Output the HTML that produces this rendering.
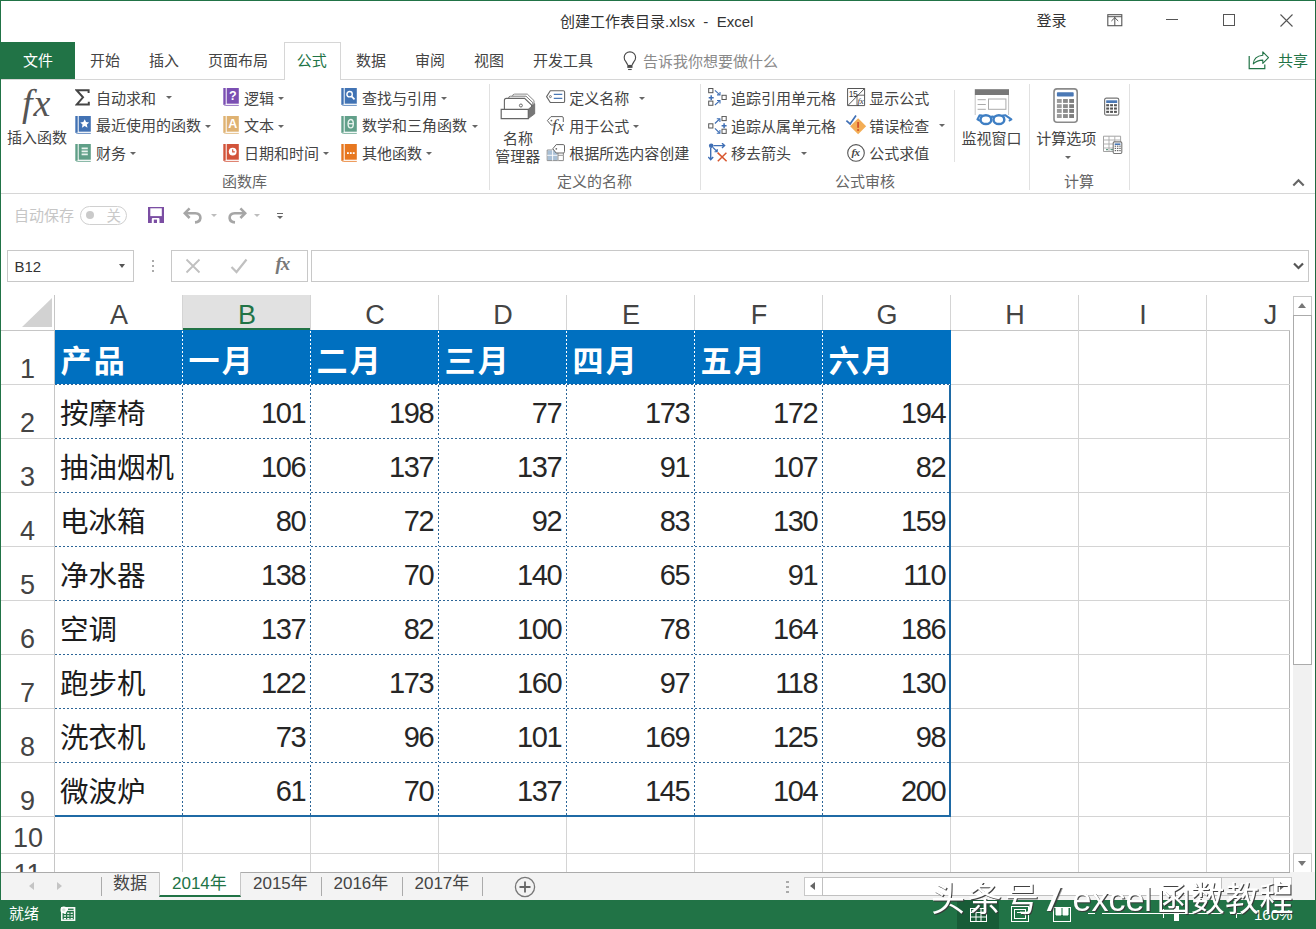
<!DOCTYPE html>
<html lang="zh-CN"><head><meta charset="utf-8"><title>Excel</title>
<style>
html,body{margin:0;padding:0;}
body{width:1316px;height:929px;overflow:hidden;position:relative;background:#fff;font-family:"Liberation Sans","Noto Sans CJK SC",sans-serif;color:#444;}
body div,body span.t,body svg{position:absolute;box-sizing:border-box;}
span.t{white-space:nowrap;display:block;}
.dd{position:absolute;width:0;height:0;border-left:3px solid transparent;border-right:3px solid transparent;border-top:3px solid #666;}
</style></head><body>

<div style="left:0px;top:0px;width:1316px;height:1px;background:#217346;"></div>
<div style="left:0px;top:0px;width:1px;height:929px;background:#217346;"></div>
<div style="left:1314.8px;top:0px;width:1.2px;height:929px;background:#1f6a40;"></div>
<span class="t" style="left:560px;top:11.5px;font-size:15px;line-height:20px;color:#333;">创建工作表目录.xlsx&nbsp;&nbsp;-&nbsp;&nbsp;Excel</span>
<span class="t" style="left:1036.5px;top:11px;font-size:15px;line-height:20px;color:#333;">登录</span>
<svg style="left:1107px;top:14px;" width="16" height="13" viewBox="0 0 16 13"><rect x="0.8" y="0.7" width="14" height="11" fill="none" stroke="#555" stroke-width="1.1"/><path d="M0.8 2.7H14.8M7.8 2.7V11.7M4.4 7L7.8 3.7L11.2 7" stroke="#555" stroke-width="1" fill="none"/></svg>
<div style="left:1166px;top:19px;width:12px;height:1px;background:#555;"></div>
<div style="left:1223px;top:14px;width:12px;height:12px;border:1px solid #555;"></div>
<svg style="left:1280px;top:14px;" width="13" height="13" viewBox="0 0 13 13"><path d="M0.5 0.5L12.5 12.5M12.5 0.5L0.5 12.5" stroke="#555" stroke-width="1.1" fill="none"/></svg>
<div style="left:1px;top:79px;width:1314px;height:1px;background:#d6d6d6;"></div>
<div style="left:1px;top:42px;width:74px;height:37px;background:#217346;"></div>
<span class="t" style="left:1px;top:51px;width:74px;text-align:center;font-size:15px;line-height:20px;color:#fff;">文件</span>
<span class="t" style="left:55px;top:51px;width:100px;text-align:center;font-size:15px;line-height:20px;color:#444;">开始</span>
<span class="t" style="left:114px;top:51px;width:100px;text-align:center;font-size:15px;line-height:20px;color:#444;">插入</span>
<span class="t" style="left:188px;top:51px;width:100px;text-align:center;font-size:15px;line-height:20px;color:#444;">页面布局</span>
<span class="t" style="left:321px;top:51px;width:100px;text-align:center;font-size:15px;line-height:20px;color:#444;">数据</span>
<span class="t" style="left:380px;top:51px;width:100px;text-align:center;font-size:15px;line-height:20px;color:#444;">审阅</span>
<span class="t" style="left:439px;top:51px;width:100px;text-align:center;font-size:15px;line-height:20px;color:#444;">视图</span>
<span class="t" style="left:513px;top:51px;width:100px;text-align:center;font-size:15px;line-height:20px;color:#444;">开发工具</span>
<div style="left:284px;top:42px;width:57px;height:38px;background:#fff;border:1px solid #d6d6d6;border-bottom:none;"></div>
<span class="t" style="left:283.2px;top:51px;width:57px;text-align:center;font-size:15px;line-height:20px;color:#217346;">公式</span>
<svg style="left:623px;top:51px;" width="14" height="20" viewBox="0 0 14 20"><path d="M4.7 13.9L2.7 10.4A5.7 5.7 0 1 1 11.1 10.4L9.1 13.9" fill="none" stroke="#4a4a4a" stroke-width="1.15"/><rect x="4.3" y="13.9" width="5.2" height="3" fill="#4a4a4a"/><path d="M5.1 18.5H8.7" stroke="#4a4a4a" stroke-width="1.1"/></svg>
<span class="t" style="left:643px;top:52px;font-size:15px;line-height:20px;color:#8a8a8a;">告诉我你想要做什么</span>
<svg style="left:1248px;top:51px;" width="22" height="19" viewBox="0 0 22 19"><path d="M1.2 4.9V17.6H16.8V13.6" fill="none" stroke="#217346" stroke-width="1.2"/><path d="M5.3 12.8Q5.8 5.2 14.8 4.2V0.9L20.5 6.6L14.8 12.3V9.1Q9 9.2 5.3 12.8Z" fill="none" stroke="#217346" stroke-width="1.1" stroke-linejoin="round"/></svg>
<span class="t" style="left:1278px;top:50.5px;font-size:15px;line-height:20px;color:#217346;">共享</span>
<div style="left:1px;top:193px;width:1314px;height:1px;background:#d6d6d6;"></div>
<div style="left:489px;top:84px;width:1px;height:106px;background:#e1e1e1;"></div>
<div style="left:700px;top:84px;width:1px;height:106px;background:#e1e1e1;"></div>
<div style="left:1029px;top:84px;width:1px;height:106px;background:#e1e1e1;"></div>
<div style="left:1129px;top:84px;width:1px;height:106px;background:#e1e1e1;"></div>
<div style="left:954px;top:90px;width:1px;height:72px;background:#e1e1e1;"></div>
<span class="t" style="left:194.5px;top:172px;width:100px;text-align:center;font-size:15px;line-height:20px;color:#666;">函数库</span>
<span class="t" style="left:534.5px;top:172px;width:120px;text-align:center;font-size:15px;line-height:20px;color:#666;">定义的名称</span>
<span class="t" style="left:815px;top:172px;width:100px;text-align:center;font-size:15px;line-height:20px;color:#666;">公式审核</span>
<span class="t" style="left:1029px;top:172px;width:100px;text-align:center;font-size:15px;line-height:20px;color:#666;">计算</span>
<svg style="left:1292px;top:178px;" width="13" height="9" viewBox="0 0 13 9"><path d="M1.3 7.6L6.5 2.2L11.7 7.6" fill="none" stroke="#666" stroke-width="2.1"/></svg>
<span class="t" style="left:22px;top:80px;font-family:'Liberation Serif',serif;font-style:italic;font-size:38px;line-height:46px;color:#555;letter-spacing:1px;">fx</span>
<span class="t" style="left:-3px;top:128px;width:80px;text-align:center;font-size:15px;line-height:20px;color:#444;">插入函数</span>
<svg style="left:75px;top:89px;" width="15" height="17" viewBox="0 0 15 17"><path d="M13.6 4V1.2H1.6L8 8.3L1.6 15.6H13.8V12.8" fill="none" stroke="#444" stroke-width="2" stroke-linejoin="miter"/></svg>
<span class="t" style="left:96px;top:88.7px;font-size:15px;line-height:20px;color:#444;">自动求和</span>
<i class="dd" style="left:166px;top:96.3px"></i>
<svg style="left:75.3px;top:116px;" width="16" height="18" viewBox="0 0 16 18"><rect x="0.3" y="0" width="2.4" height="16.6" fill="#4272b4"/><rect x="3.7" y="0" width="12.1" height="15.7" fill="#4272b4"/><path d="M0.8 16.2Q0.9 17.4 2.4 17.4H15.8" fill="none" stroke="#4272b4" stroke-width="1" opacity="0.8"/><path d="M9.7 3.2l1.35 2.9 3.1.35-2.3 2.1.65 3.1-2.8-1.6-2.8 1.6.65-3.1-2.3-2.1 3.1-.35z" fill="#fff"/></svg>
<span class="t" style="left:96px;top:116.3px;font-size:15px;line-height:20px;color:#444;">最近使用的函数</span>
<i class="dd" style="left:205.3px;top:124.8px"></i>
<svg style="left:75.3px;top:144px;" width="16" height="18" viewBox="0 0 16 18"><rect x="0.3" y="0" width="2.4" height="16.6" fill="#5f9f87"/><rect x="3.7" y="0" width="12.1" height="15.7" fill="#5f9f87"/><path d="M0.8 16.2Q0.9 17.4 2.4 17.4H15.8" fill="none" stroke="#5f9f87" stroke-width="1" opacity="0.8"/><path d="M6.6 4.4h6.2M6.6 7.4h6.2M6.6 10.4h6.2" stroke="#e8f3ee" stroke-width="1.7"/></svg>
<span class="t" style="left:96px;top:144px;font-size:15px;line-height:20px;color:#444;">财务</span>
<i class="dd" style="left:130px;top:152.3px"></i>
<svg style="left:223px;top:88px;" width="16" height="18" viewBox="0 0 16 18"><rect x="0.3" y="0" width="2.4" height="16.6" fill="#7b4fb3"/><rect x="3.7" y="0" width="12.1" height="15.7" fill="#7b4fb3"/><path d="M0.8 16.2Q0.9 17.4 2.4 17.4H15.8" fill="none" stroke="#7b4fb3" stroke-width="1" opacity="0.8"/><text x="9.8" y="12.3" font-size="12.5" font-weight="bold" fill="#fff" text-anchor="middle" font-family="Liberation Sans">?</text></svg>
<span class="t" style="left:244px;top:88.7px;font-size:15px;line-height:20px;color:#444;">逻辑</span>
<i class="dd" style="left:278px;top:96.6px"></i>
<svg style="left:223px;top:116px;" width="16" height="18" viewBox="0 0 16 18"><rect x="0.3" y="0" width="2.4" height="16.6" fill="#dfb272"/><rect x="3.7" y="0" width="12.1" height="15.7" fill="#dfb272"/><path d="M0.8 16.2Q0.9 17.4 2.4 17.4H15.8" fill="none" stroke="#dfb272" stroke-width="1" opacity="0.8"/><text x="9.8" y="12.3" font-size="12.5" font-weight="bold" fill="#fff" text-anchor="middle" font-family="Liberation Sans">A</text></svg>
<span class="t" style="left:244px;top:116.3px;font-size:15px;line-height:20px;color:#444;">文本</span>
<i class="dd" style="left:278px;top:124.8px"></i>
<svg style="left:223px;top:144px;" width="16" height="18" viewBox="0 0 16 18"><rect x="0.3" y="0" width="2.4" height="16.6" fill="#d2533a"/><rect x="3.7" y="0" width="12.1" height="15.7" fill="#d2533a"/><path d="M0.8 16.2Q0.9 17.4 2.4 17.4H15.8" fill="none" stroke="#d2533a" stroke-width="1" opacity="0.8"/><circle cx="9.7" cy="7.6" r="3.9" fill="#fff"/><path d="M9.7 5.2V7.9H11.8" stroke="#d2533a" stroke-width="1.1" fill="none"/></svg>
<span class="t" style="left:244px;top:144px;font-size:15px;line-height:20px;color:#444;">日期和时间</span>
<i class="dd" style="left:323px;top:152.3px"></i>
<svg style="left:341px;top:88px;" width="16" height="18" viewBox="0 0 16 18"><rect x="0.3" y="0" width="2.4" height="16.6" fill="#4173b4"/><rect x="3.7" y="0" width="12.1" height="15.7" fill="#4173b4"/><path d="M0.8 16.2Q0.9 17.4 2.4 17.4H15.8" fill="none" stroke="#4173b4" stroke-width="1" opacity="0.8"/><circle cx="8.6" cy="6.2" r="2.7" fill="none" stroke="#fff" stroke-width="1.4"/><path d="M10.6 8.3l2.9 3" stroke="#fff" stroke-width="1.7"/></svg>
<span class="t" style="left:362px;top:88.7px;font-size:15px;line-height:20px;color:#444;">查找与引用</span>
<i class="dd" style="left:441.3px;top:96.8px"></i>
<svg style="left:341px;top:116px;" width="16" height="18" viewBox="0 0 16 18"><rect x="0.3" y="0" width="2.4" height="16.6" fill="#62a08a"/><rect x="3.7" y="0" width="12.1" height="15.7" fill="#62a08a"/><path d="M0.8 16.2Q0.9 17.4 2.4 17.4H15.8" fill="none" stroke="#62a08a" stroke-width="1" opacity="0.8"/><ellipse cx="9.7" cy="7.7" rx="2.6" ry="4.2" fill="none" stroke="#e8f3ee" stroke-width="1.4"/><path d="M7.3 7.7h4.8" stroke="#e8f3ee" stroke-width="1.3"/></svg>
<span class="t" style="left:362px;top:116.3px;font-size:15px;line-height:20px;color:#444;">数学和三角函数</span>
<i class="dd" style="left:472px;top:124.8px"></i>
<svg style="left:341px;top:144px;" width="16" height="18" viewBox="0 0 16 18"><rect x="0.3" y="0" width="2.4" height="16.6" fill="#e7771f"/><rect x="3.7" y="0" width="12.1" height="15.7" fill="#e7771f"/><path d="M0.8 16.2Q0.9 17.4 2.4 17.4H15.8" fill="none" stroke="#e7771f" stroke-width="1" opacity="0.8"/><rect x="6" y="8.2" width="1.8" height="1.8" fill="#fff"/><rect x="8.9" y="8.2" width="1.8" height="1.8" fill="#fff"/><rect x="11.8" y="8.2" width="1.8" height="1.8" fill="#fff"/></svg>
<span class="t" style="left:362px;top:144px;font-size:15px;line-height:20px;color:#444;">其他函数</span>
<i class="dd" style="left:426.3px;top:152.3px"></i>
<svg style="left:500px;top:93px;" width="36" height="27" viewBox="0 0 36 27"><path d="M12.5 3.2Q12.6 1.1 14.6 1.1H27.3L34 7.6V11" fill="#fff" stroke="#8a8a8a" stroke-width="1"/><path d="M8.5 5.4Q8.6 3.2 10.6 3.2H26L32.8 9.6V13" fill="#fff" stroke="#7a7a7a" stroke-width="1"/><path d="M4.4 16.3V7.4Q4.4 5.4 6.4 5.4H24.6L31.6 12V16.3" fill="#fff" stroke="#666" stroke-width="1.1"/><circle cx="20.9" cy="12.5" r="1.5" fill="#fff" stroke="#666" stroke-width="1"/><path d="M28.3 16.3L34.7 10.7V20.8L28.3 25.6Z" fill="#777" stroke="#666" stroke-width="0.8"/><path d="M1.2 16.3H28.3V25.6H1.2Z" fill="#fff" stroke="#666" stroke-width="1.2"/></svg>
<span class="t" style="left:488px;top:128.5px;width:60px;text-align:center;font-size:15px;line-height:20px;color:#444;">名称</span>
<span class="t" style="left:487.7px;top:147.3px;width:60px;text-align:center;font-size:15px;line-height:20px;color:#444;">管理器</span>
<svg style="left:546px;top:90px;" width="20" height="14" viewBox="0 0 20 14"><path d="M4.3 0.7H17.3Q18.6 0.7 18.6 2V11.2Q18.6 12.5 17.3 12.5H4.3L0.6 6.6Z" fill="#fff" stroke="#666" stroke-width="1.1" stroke-linejoin="round"/><circle cx="4.4" cy="6.6" r="1" fill="none" stroke="#666" stroke-width="0.9"/><path d="M7.8 4.4H16.3M7.8 8.4H16.3" stroke="#4a78b5" stroke-width="1.1"/></svg>
<span class="t" style="left:569.3px;top:88.7px;font-size:15px;line-height:20px;color:#444;">定义名称</span>
<i class="dd" style="left:639px;top:96.6px"></i>
<svg style="left:546px;top:116px;" width="21" height="20" viewBox="0 0 21 20"><path d="M8 9L5 9L1.4 4.6L5 0.6H16Q17.3 0.6 17.3 2V6" fill="none" stroke="#666" stroke-width="1"/><circle cx="5.4" cy="4.6" r="0.9" fill="#666"/><text x="6.2" y="14.8" font-family="Liberation Serif" font-style="italic" font-size="17" fill="#444">f<tspan x="11.3" font-size="15">x</tspan></text></svg>
<span class="t" style="left:569.3px;top:116.5px;font-size:15px;line-height:20px;color:#444;">用于公式</span>
<i class="dd" style="left:633px;top:124.8px"></i>
<svg style="left:546px;top:143px;" width="20" height="20" viewBox="0 0 20 20"><path d="M1.2 7H17.4V17.6H1.2Z" fill="#fff" stroke="#8a8a8a" stroke-width="1"/><rect x="1.7" y="7.5" width="10.3" height="9.6" fill="#a9c0d6"/><path d="M1.2 12.3H17.4M6.6 7V17.6M12 7V17.6" stroke="#fff" stroke-width="0.9"/><path d="M12 12.3H17.4M12 7V17.6" stroke="#8a8a8a" stroke-width="0.9"/><path d="M10.2 1.6H17.2Q18.5 1.6 18.5 2.9V8.7Q18.5 10 17.2 10H10.2L6.8 5.8Z" fill="#fff" stroke="#666" stroke-width="1"/><circle cx="10.3" cy="5.8" r="0.9" fill="#666"/></svg>
<span class="t" style="left:569.3px;top:144.2px;font-size:15px;line-height:20px;color:#444;">根据所选内容创建</span>
<svg style="left:708px;top:88px;" width="20" height="19" viewBox="0 0 20 19"><rect x="0.7" y="0.5" width="4.2" height="4.2" fill="#fff" stroke="#555" stroke-width="1"/><rect x="0.7" y="13.1" width="4.2" height="4.2" fill="#fff" stroke="#555" stroke-width="1"/><rect x="14" y="7.3" width="4.2" height="4.2" fill="#fff" stroke="#555" stroke-width="1"/><path d="M3.2 7.2v5M0.7 9.7h5" stroke="#3f6fb5" stroke-width="1.5"/><path d="M6.9 2.4L11.6 6.6M6.9 17L11.6 12.8" stroke="#3f6fb5" stroke-width="1.1"/><path d="M9 6.9H12V3.9M9 12.5H12V15.5" stroke="#3f6fb5" stroke-width="1.1" fill="none"/></svg>
<span class="t" style="left:731px;top:88.7px;font-size:15px;line-height:20px;color:#444;">追踪引用单元格</span>
<svg style="left:708px;top:116px;" width="20" height="19" viewBox="0 0 20 19"><rect x="0.7" y="7.8" width="4.2" height="4.2" fill="#fff" stroke="#555" stroke-width="1"/><rect x="14" y="0.4" width="4.2" height="4.2" fill="#fff" stroke="#555" stroke-width="1"/><rect x="14" y="13.2" width="4.2" height="4.2" fill="#fff" stroke="#555" stroke-width="1"/><path d="M16.1 7.3v5M13.6 9.8h5" stroke="#3f6fb5" stroke-width="1.5"/><path d="M6.9 7.5L11.6 3M6.9 12.4L11.6 17" stroke="#3f6fb5" stroke-width="1.1"/><path d="M8.8 2.8H11.9V5.9M8.8 17.2H11.9V14.1" stroke="#3f6fb5" stroke-width="1.1" fill="none"/></svg>
<span class="t" style="left:731px;top:116.7px;font-size:15px;line-height:20px;color:#444;">追踪从属单元格</span>
<svg style="left:708px;top:143px;" width="20" height="20" viewBox="0 0 20 20"><circle cx="3.2" cy="2.7" r="2.3" fill="#3f6fb5"/><path d="M5.5 2.6H16.5M14 0.2L16.6 2.6L14 5" stroke="#3f6fb5" stroke-width="1.4" fill="none"/><path d="M2.7 5V16.5M0.2 14L2.7 16.8L5.2 14" stroke="#3f6fb5" stroke-width="1.4" fill="none"/><path d="M5 4.5L9 8.5M6.5 8.7H9.2V6" stroke="#3f6fb5" stroke-width="1.1" fill="none"/><path d="M9.6 9.6L18.6 18.2M18.4 9.8L9.8 18.2" stroke="#d8562e" stroke-width="1.5"/></svg>
<span class="t" style="left:731px;top:144.2px;font-size:15px;line-height:20px;color:#444;">移去箭头</span>
<i class="dd" style="left:801px;top:152px"></i>
<svg style="left:847px;top:88px;" width="19" height="19" viewBox="0 0 19 19"><path d="M0.6 0.5H17.6V17.6H0.6Z" fill="#fff" stroke="#555" stroke-width="1"/><path d="M17.6 0.5L1.2 17.2" stroke="#555" stroke-width="1"/><path d="M10 17.6V7.2H17.6" stroke="#555" stroke-width="0.9" fill="none"/><text x="1.8" y="8.8" font-size="8.5" fill="#333" font-family="Liberation Sans" letter-spacing="-0.6">15</text><text x="10.6" y="15.6" font-size="9" font-style="italic" fill="#333" font-family="Liberation Serif" letter-spacing="-0.4">fx</text></svg>
<span class="t" style="left:869.3px;top:88.7px;font-size:15px;line-height:20px;color:#444;">显示公式</span>
<svg style="left:845px;top:114px;" width="23" height="22" viewBox="0 0 23 22"><path d="M1.4 6.7L5.1 9.9L11 1.4" stroke="#3f6fb5" stroke-width="1.7" fill="none"/><path d="M13.1 4.3L21.1 12.3L13.1 20.3L5.1 12.3Z" fill="#f3ad55"/><path d="M13.1 8V13.8" stroke="#d4552a" stroke-width="1.9"/><circle cx="13.1" cy="16" r="1.1" fill="#d4552a"/></svg>
<span class="t" style="left:869.3px;top:116.7px;font-size:15px;line-height:20px;color:#444;">错误检查</span>
<i class="dd" style="left:939px;top:124.4px"></i>
<svg style="left:846px;top:143px;" width="20" height="20" viewBox="0 0 20 20"><circle cx="10" cy="9.9" r="8.3" fill="#fff" stroke="#555" stroke-width="1.1"/><text x="5.4" y="13" font-size="11" font-style="italic" font-weight="bold" fill="#444" font-family="Liberation Serif" letter-spacing="-0.5">fx</text></svg>
<span class="t" style="left:869.3px;top:144.2px;font-size:15px;line-height:20px;color:#444;">公式求值</span>
<svg style="left:974px;top:88px;" width="39" height="38" viewBox="0 0 39 38"><rect x="0.8" y="1.2" width="34.2" height="5.8" fill="#777"/><path d="M1.2 7V27M34.6 7V27" stroke="#c4c4c4" stroke-width="1"/><path d="M3.6 11.7H11.8M3.6 16.5H11.8M3.6 21.3H11.8" stroke="#aaa" stroke-width="1"/><rect x="14.5" y="11" width="17.4" height="10.3" fill="#fff" stroke="#aaa" stroke-width="1"/><ellipse cx="11.9" cy="31.7" rx="5.4" ry="4.4" fill="#fff" stroke="#3f7fc4" stroke-width="2.5"/><ellipse cx="24.9" cy="31.7" rx="5.4" ry="4.4" fill="#fff" stroke="#3f7fc4" stroke-width="2.5"/><path d="M16.6 29.6Q18.4 27.6 20.2 29.6" stroke="#3f7fc4" stroke-width="2.2" fill="none"/><path d="M8 27.4L5.6 27.2L3.4 31.4L5.2 32.4M28.8 27.4L31.2 27.2L37.4 31.4L35.6 32.4" stroke="#3f7fc4" stroke-width="2" fill="none" stroke-linejoin="round" stroke-linecap="round"/></svg>
<span class="t" style="left:951.6px;top:128.7px;width:80px;text-align:center;font-size:15px;line-height:20px;color:#444;">监视窗口</span>
<svg style="left:1053px;top:88px;" width="26" height="36" viewBox="0 0 26 36"><rect x="1" y="0.9" width="23.2" height="33.4" rx="3" fill="#fff" stroke="#8a8a8a" stroke-width="1.6"/><rect x="3.9" y="4.2" width="16.8" height="4.4" rx="0.8" fill="#4a78b5"/><rect x="3.90" y="11.00" width="4.8" height="3.9" fill="#9a9a9a"/><rect x="10.05" y="11.00" width="4.8" height="3.9" fill="#8c8c8c"/><rect x="16.20" y="11.00" width="4.8" height="3.9" fill="#7e7e7e"/><rect x="3.90" y="16.20" width="4.8" height="3.9" fill="#9a9a9a"/><rect x="10.05" y="16.20" width="4.8" height="3.9" fill="#8c8c8c"/><rect x="16.20" y="16.20" width="4.8" height="3.9" fill="#7e7e7e"/><rect x="3.90" y="21.00" width="4.8" height="3.9" fill="#9a9a9a"/><rect x="10.05" y="21.00" width="4.8" height="3.9" fill="#8c8c8c"/><rect x="16.20" y="21.00" width="4.8" height="3.9" fill="#7e7e7e"/><rect x="3.90" y="26.10" width="4.8" height="3.9" fill="#9a9a9a"/><rect x="10.05" y="26.10" width="4.8" height="3.9" fill="#8c8c8c"/><rect x="16.20" y="26.10" width="4.8" height="3.9" fill="#7e7e7e"/></svg>
<span class="t" style="left:1026.2px;top:128.7px;width:80px;text-align:center;font-size:15px;line-height:20px;color:#444;">计算选项</span>
<i class="dd" style="left:1065.2px;top:156.1px"></i>
<svg style="left:1104px;top:97px;" width="16" height="19" viewBox="0 0 16 19"><rect x="0.6" y="1.2" width="14.2" height="17" rx="1.8" fill="#fff" stroke="#777" stroke-width="1.2"/><rect x="2.2" y="3.3" width="11" height="2.7" fill="#4a78b5"/><rect x="2.20" y="7.20" width="2.9" height="2.1" fill="#555"/><rect x="6.10" y="7.20" width="2.9" height="2.1" fill="#555"/><rect x="10.00" y="7.20" width="2.9" height="2.1" fill="#555"/><rect x="2.20" y="10.50" width="2.9" height="2.1" fill="#555"/><rect x="6.10" y="10.50" width="2.9" height="2.1" fill="#555"/><rect x="10.00" y="10.50" width="2.9" height="2.1" fill="#555"/><rect x="2.20" y="13.80" width="2.9" height="2.1" fill="#555"/><rect x="6.10" y="13.80" width="2.9" height="2.1" fill="#555"/><rect x="10.00" y="13.80" width="2.9" height="2.1" fill="#555"/></svg>
<svg style="left:1103px;top:135px;" width="20" height="20" viewBox="0 0 20 20"><path d="M0.5 1.2H17.6V16.5H0.5Z" fill="#fff" stroke="#999" stroke-width="0.9"/><path d="M0.5 5H17.6M0.5 9H17.6M0.5 13H17.6M6 1.2V16.5M11.8 1.2V16.5" stroke="#aaa" stroke-width="0.9"/><path d="M3 14.6H5M7.5 14.6H10" stroke="#5f9f87" stroke-width="1.2"/><rect x="10.2" y="6.9" width="8.6" height="11.6" rx="1.2" fill="#fff" stroke="#777" stroke-width="1.1"/><rect x="11.7" y="8.4" width="5.7" height="1.6" fill="#4a78b5"/><rect x="11.70" y="10.60" width="1.4" height="1.2" fill="#666"/><rect x="14.00" y="10.60" width="1.4" height="1.2" fill="#666"/><rect x="16.30" y="10.60" width="1.4" height="1.2" fill="#666"/><rect x="11.70" y="12.80" width="1.4" height="1.2" fill="#666"/><rect x="14.00" y="12.80" width="1.4" height="1.2" fill="#666"/><rect x="16.30" y="12.80" width="1.4" height="1.2" fill="#666"/><rect x="11.70" y="15.00" width="1.4" height="1.2" fill="#666"/><rect x="14.00" y="15.00" width="1.4" height="1.2" fill="#666"/><rect x="16.30" y="15.00" width="1.4" height="1.2" fill="#666"/></svg>
<span class="t" style="left:14px;top:205.5px;font-size:15px;line-height:20px;color:#c6c6c6;">自动保存</span>
<div style="left:80px;top:205.5px;width:47px;height:19.5px;border:1.3px solid #d0d0d0;border-radius:10px;"></div>
<div style="left:85.6px;top:210.7px;width:8.6px;height:8.6px;background:#cacaca;border-radius:50%;"></div>
<span class="t" style="left:106.5px;top:205.8px;font-size:14.5px;line-height:20px;color:#cacaca;">关</span>
<svg style="left:148px;top:207px;" width="16" height="16" viewBox="0 0 16 16"><path d="M0 0H16V16H0Z" fill="#7b4ea3"/><rect x="2.3" y="1.3" width="11.5" height="7.8" fill="#fff"/><path d="M3.8 16V12Q3.8 11 4.8 11H10.5Q11.5 11 11.5 12V16Z" fill="#fff"/><rect x="5.8" y="12.6" width="3.2" height="3.4" fill="#7b4ea3"/></svg>
<svg style="left:183px;top:207px;" width="20" height="17" viewBox="0 0 20 17"><path d="M6.6 1.4L1.8 6.2L6.6 11" fill="none" stroke="#a6a6a6" stroke-width="2.6" stroke-linejoin="miter"/><path d="M2.4 6.2H12.2Q17.6 6.6 17.4 11Q17 15 12 15.4" fill="none" stroke="#a6a6a6" stroke-width="2.6"/></svg>
<i class="dd" style="left:210.5px;top:214px;border-top-color:#bdbdbd;"></i>
<svg style="left:227px;top:207px;" width="20" height="17" viewBox="0 0 20 17"><path d="M13.4 1.4L18.2 6.2L13.4 11" fill="none" stroke="#a6a6a6" stroke-width="2.6" stroke-linejoin="miter"/><path d="M17.6 6.2H7.8Q2.4 6.6 2.6 11Q3 15 8 15.4" fill="none" stroke="#a6a6a6" stroke-width="2.6"/></svg>
<i class="dd" style="left:254px;top:214px;border-top-color:#bdbdbd;"></i>
<div style="left:277px;top:213px;width:6px;height:1px;background:#666;"></div>
<i class="dd" style="left:277px;top:215.6px;border-top-color:#666;"></i>
<div style="left:7px;top:250px;width:127px;height:32px;border:1px solid #c8c8c8;background:#fff;"></div>
<span class="t" style="left:14.5px;top:256.6px;font-size:15px;line-height:20px;color:#333;">B12</span>
<i class="dd" style="left:119px;top:263.5px;border-top:4px solid #555;border-left-width:3.5px;border-right-width:3.5px;"></i>
<div style="left:152px;top:260px;width:2px;height:2px;background:#aaa;"></div>
<div style="left:152px;top:265px;width:2px;height:2px;background:#aaa;"></div>
<div style="left:152px;top:270px;width:2px;height:2px;background:#aaa;"></div>
<div style="left:171px;top:250px;width:137px;height:32px;border:1px solid #c8c8c8;background:#fff;"></div>
<svg style="left:185px;top:258px;" width="16" height="16" viewBox="0 0 16 16"><path d="M1.5 1.5L14.5 14.5M14.5 1.5L1.5 14.5" stroke="#c0c0c0" stroke-width="1.8" fill="none"/></svg>
<svg style="left:230px;top:258px;" width="18" height="16" viewBox="0 0 18 16"><path d="M1.5 9L6.5 14L16.5 1.5" stroke="#c0c0c0" stroke-width="2.2" fill="none"/></svg>
<span class="t" style="left:275.5px;top:253px;font-family:'Liberation Serif',serif;font-style:italic;font-weight:bold;font-size:19px;line-height:22px;color:#787878;letter-spacing:-1px;">fx</span>
<div style="left:311px;top:250px;width:998px;height:32px;border:1px solid #c8c8c8;background:#fff;"></div>
<svg style="left:1293px;top:262px;" width="11" height="8" viewBox="0 0 11 8"><path d="M1 1.5L5.5 6L10 1.5" stroke="#555" stroke-width="2.2" fill="none"/></svg>
<div style="left:1px;top:330px;width:1289px;height:1px;background:#c6c6c6;"></div>
<div style="left:54px;top:295px;width:1px;height:577px;background:#c6c6c6;"></div>
<div style="left:183px;top:295px;width:127px;height:35px;background:#e1e1e1;border-bottom:2px solid #217346;"></div>
<div style="left:182px;top:295px;width:1px;height:36px;background:#d4d4d4;"></div>
<div style="left:310px;top:295px;width:1px;height:36px;background:#d4d4d4;"></div>
<div style="left:438px;top:295px;width:1px;height:36px;background:#d4d4d4;"></div>
<div style="left:566px;top:295px;width:1px;height:36px;background:#d4d4d4;"></div>
<div style="left:694px;top:295px;width:1px;height:36px;background:#d4d4d4;"></div>
<div style="left:822px;top:295px;width:1px;height:36px;background:#d4d4d4;"></div>
<div style="left:950px;top:295px;width:1px;height:36px;background:#d4d4d4;"></div>
<div style="left:1078px;top:295px;width:1px;height:36px;background:#d4d4d4;"></div>
<div style="left:1206px;top:295px;width:1px;height:36px;background:#d4d4d4;"></div>
<div style="left:182px;top:331px;width:1px;height:541px;background:#d4d4d4;"></div>
<div style="left:310px;top:331px;width:1px;height:541px;background:#d4d4d4;"></div>
<div style="left:438px;top:331px;width:1px;height:541px;background:#d4d4d4;"></div>
<div style="left:566px;top:331px;width:1px;height:541px;background:#d4d4d4;"></div>
<div style="left:694px;top:331px;width:1px;height:541px;background:#d4d4d4;"></div>
<div style="left:822px;top:331px;width:1px;height:541px;background:#d4d4d4;"></div>
<div style="left:950px;top:331px;width:1px;height:541px;background:#d4d4d4;"></div>
<div style="left:1078px;top:331px;width:1px;height:541px;background:#d4d4d4;"></div>
<div style="left:1206px;top:331px;width:1px;height:541px;background:#d4d4d4;"></div>
<div style="left:1289px;top:331px;width:1px;height:542px;background:#b4b4b4;"></div>
<div style="left:1px;top:384px;width:1289px;height:1px;background:#d4d4d4;"></div>
<div style="left:1px;top:438px;width:1289px;height:1px;background:#d4d4d4;"></div>
<div style="left:1px;top:492px;width:1289px;height:1px;background:#d4d4d4;"></div>
<div style="left:1px;top:546px;width:1289px;height:1px;background:#d4d4d4;"></div>
<div style="left:1px;top:600px;width:1289px;height:1px;background:#d4d4d4;"></div>
<div style="left:1px;top:654px;width:1289px;height:1px;background:#d4d4d4;"></div>
<div style="left:1px;top:708px;width:1289px;height:1px;background:#d4d4d4;"></div>
<div style="left:1px;top:762px;width:1289px;height:1px;background:#d4d4d4;"></div>
<div style="left:1px;top:816px;width:1289px;height:1px;background:#d4d4d4;"></div>
<div style="left:1px;top:853px;width:1289px;height:1px;background:#d4d4d4;"></div>
<svg style="left:22px;top:298px;" width="30" height="29" viewBox="0 0 30 29"><path d="M30 0V29H0Z" fill="#d2d2d2"/></svg>
<span class="t" style="left:89px;top:300px;width:60px;text-align:center;font-size:27px;line-height:30px;color:#444;">A</span>
<span class="t" style="left:217px;top:300px;width:60px;text-align:center;font-size:27px;line-height:30px;color:#217346;">B</span>
<span class="t" style="left:345px;top:300px;width:60px;text-align:center;font-size:27px;line-height:30px;color:#444;">C</span>
<span class="t" style="left:473px;top:300px;width:60px;text-align:center;font-size:27px;line-height:30px;color:#444;">D</span>
<span class="t" style="left:601px;top:300px;width:60px;text-align:center;font-size:27px;line-height:30px;color:#444;">E</span>
<span class="t" style="left:729px;top:300px;width:60px;text-align:center;font-size:27px;line-height:30px;color:#444;">F</span>
<span class="t" style="left:857px;top:300px;width:60px;text-align:center;font-size:27px;line-height:30px;color:#444;">G</span>
<span class="t" style="left:985px;top:300px;width:60px;text-align:center;font-size:27px;line-height:30px;color:#444;">H</span>
<span class="t" style="left:1113px;top:300px;width:60px;text-align:center;font-size:27px;line-height:30px;color:#444;">I</span>
<span class="t" style="left:1240.5px;top:300px;width:60px;text-align:center;font-size:27px;line-height:30px;color:#444;">J</span>
<span class="t" style="left:0.5px;top:353.5px;width:54px;text-align:center;font-size:27px;line-height:30px;color:#444;">1</span>
<span class="t" style="left:0.5px;top:407.5px;width:54px;text-align:center;font-size:27px;line-height:30px;color:#444;">2</span>
<span class="t" style="left:0.5px;top:461.5px;width:54px;text-align:center;font-size:27px;line-height:30px;color:#444;">3</span>
<span class="t" style="left:0.5px;top:515.5px;width:54px;text-align:center;font-size:27px;line-height:30px;color:#444;">4</span>
<span class="t" style="left:0.5px;top:569.5px;width:54px;text-align:center;font-size:27px;line-height:30px;color:#444;">5</span>
<span class="t" style="left:0.5px;top:623.5px;width:54px;text-align:center;font-size:27px;line-height:30px;color:#444;">6</span>
<span class="t" style="left:0.5px;top:677.5px;width:54px;text-align:center;font-size:27px;line-height:30px;color:#444;">7</span>
<span class="t" style="left:0.5px;top:731.5px;width:54px;text-align:center;font-size:27px;line-height:30px;color:#444;">8</span>
<span class="t" style="left:0.5px;top:785.5px;width:54px;text-align:center;font-size:27px;line-height:30px;color:#444;">9</span>
<span class="t" style="left:1px;top:823px;width:54px;text-align:center;font-size:27px;line-height:30px;color:#444;">10</span>
<div style="left:1px;top:854px;width:53px;height:18px;overflow:hidden;"><span class="t" style="left:0;top:5px;width:53px;text-align:center;font-size:27px;line-height:30px;color:#444;">11</span></div>
<div style="left:55px;top:330px;width:896px;height:55px;background:#0070c0;"></div>
<span class="t hb" style="left:60.5px;top:344px;font-size:31px;line-height:36px;color:#fff;font-weight:bold;letter-spacing:2.3px;">产品</span>
<span class="t hb" style="left:188.5px;top:344px;font-size:31px;line-height:36px;color:#fff;font-weight:bold;letter-spacing:2.3px;">一月</span>
<span class="t hb" style="left:316.5px;top:344px;font-size:31px;line-height:36px;color:#fff;font-weight:bold;letter-spacing:2.3px;">二月</span>
<span class="t hb" style="left:444.5px;top:344px;font-size:31px;line-height:36px;color:#fff;font-weight:bold;letter-spacing:2.3px;">三月</span>
<span class="t hb" style="left:572.5px;top:344px;font-size:31px;line-height:36px;color:#fff;font-weight:bold;letter-spacing:2.3px;">四月</span>
<span class="t hb" style="left:700.5px;top:344px;font-size:31px;line-height:36px;color:#fff;font-weight:bold;letter-spacing:2.3px;">五月</span>
<span class="t hb" style="left:828.5px;top:344px;font-size:31px;line-height:36px;color:#fff;font-weight:bold;letter-spacing:2.3px;">六月</span>
<span class="t" style="left:60px;top:396px;font-size:28.5px;line-height:36px;color:#1c1c1c;">按摩椅</span>
<span class="t" style="left:185.2px;top:395px;width:120px;text-align:right;font-size:29px;line-height:36px;color:#262626;letter-spacing:-1.4px;">101</span>
<span class="t" style="left:313.2px;top:395px;width:120px;text-align:right;font-size:29px;line-height:36px;color:#262626;letter-spacing:-1.4px;">198</span>
<span class="t" style="left:441.2px;top:395px;width:120px;text-align:right;font-size:29px;line-height:36px;color:#262626;letter-spacing:-1.4px;">77</span>
<span class="t" style="left:569.2px;top:395px;width:120px;text-align:right;font-size:29px;line-height:36px;color:#262626;letter-spacing:-1.4px;">173</span>
<span class="t" style="left:697.2px;top:395px;width:120px;text-align:right;font-size:29px;line-height:36px;color:#262626;letter-spacing:-1.4px;">172</span>
<span class="t" style="left:825.2px;top:395px;width:120px;text-align:right;font-size:29px;line-height:36px;color:#262626;letter-spacing:-1.4px;">194</span>
<span class="t" style="left:60px;top:450px;font-size:28.5px;line-height:36px;color:#1c1c1c;">抽油烟机</span>
<span class="t" style="left:185.2px;top:449px;width:120px;text-align:right;font-size:29px;line-height:36px;color:#262626;letter-spacing:-1.4px;">106</span>
<span class="t" style="left:313.2px;top:449px;width:120px;text-align:right;font-size:29px;line-height:36px;color:#262626;letter-spacing:-1.4px;">137</span>
<span class="t" style="left:441.2px;top:449px;width:120px;text-align:right;font-size:29px;line-height:36px;color:#262626;letter-spacing:-1.4px;">137</span>
<span class="t" style="left:569.2px;top:449px;width:120px;text-align:right;font-size:29px;line-height:36px;color:#262626;letter-spacing:-1.4px;">91</span>
<span class="t" style="left:697.2px;top:449px;width:120px;text-align:right;font-size:29px;line-height:36px;color:#262626;letter-spacing:-1.4px;">107</span>
<span class="t" style="left:825.2px;top:449px;width:120px;text-align:right;font-size:29px;line-height:36px;color:#262626;letter-spacing:-1.4px;">82</span>
<span class="t" style="left:60px;top:504px;font-size:28.5px;line-height:36px;color:#1c1c1c;">电冰箱</span>
<span class="t" style="left:185.2px;top:503px;width:120px;text-align:right;font-size:29px;line-height:36px;color:#262626;letter-spacing:-1.4px;">80</span>
<span class="t" style="left:313.2px;top:503px;width:120px;text-align:right;font-size:29px;line-height:36px;color:#262626;letter-spacing:-1.4px;">72</span>
<span class="t" style="left:441.2px;top:503px;width:120px;text-align:right;font-size:29px;line-height:36px;color:#262626;letter-spacing:-1.4px;">92</span>
<span class="t" style="left:569.2px;top:503px;width:120px;text-align:right;font-size:29px;line-height:36px;color:#262626;letter-spacing:-1.4px;">83</span>
<span class="t" style="left:697.2px;top:503px;width:120px;text-align:right;font-size:29px;line-height:36px;color:#262626;letter-spacing:-1.4px;">130</span>
<span class="t" style="left:825.2px;top:503px;width:120px;text-align:right;font-size:29px;line-height:36px;color:#262626;letter-spacing:-1.4px;">159</span>
<span class="t" style="left:60px;top:558px;font-size:28.5px;line-height:36px;color:#1c1c1c;">净水器</span>
<span class="t" style="left:185.2px;top:557px;width:120px;text-align:right;font-size:29px;line-height:36px;color:#262626;letter-spacing:-1.4px;">138</span>
<span class="t" style="left:313.2px;top:557px;width:120px;text-align:right;font-size:29px;line-height:36px;color:#262626;letter-spacing:-1.4px;">70</span>
<span class="t" style="left:441.2px;top:557px;width:120px;text-align:right;font-size:29px;line-height:36px;color:#262626;letter-spacing:-1.4px;">140</span>
<span class="t" style="left:569.2px;top:557px;width:120px;text-align:right;font-size:29px;line-height:36px;color:#262626;letter-spacing:-1.4px;">65</span>
<span class="t" style="left:697.2px;top:557px;width:120px;text-align:right;font-size:29px;line-height:36px;color:#262626;letter-spacing:-1.4px;">91</span>
<span class="t" style="left:825.2px;top:557px;width:120px;text-align:right;font-size:29px;line-height:36px;color:#262626;letter-spacing:-1.4px;">110</span>
<span class="t" style="left:60px;top:612px;font-size:28.5px;line-height:36px;color:#1c1c1c;">空调</span>
<span class="t" style="left:185.2px;top:611px;width:120px;text-align:right;font-size:29px;line-height:36px;color:#262626;letter-spacing:-1.4px;">137</span>
<span class="t" style="left:313.2px;top:611px;width:120px;text-align:right;font-size:29px;line-height:36px;color:#262626;letter-spacing:-1.4px;">82</span>
<span class="t" style="left:441.2px;top:611px;width:120px;text-align:right;font-size:29px;line-height:36px;color:#262626;letter-spacing:-1.4px;">100</span>
<span class="t" style="left:569.2px;top:611px;width:120px;text-align:right;font-size:29px;line-height:36px;color:#262626;letter-spacing:-1.4px;">78</span>
<span class="t" style="left:697.2px;top:611px;width:120px;text-align:right;font-size:29px;line-height:36px;color:#262626;letter-spacing:-1.4px;">164</span>
<span class="t" style="left:825.2px;top:611px;width:120px;text-align:right;font-size:29px;line-height:36px;color:#262626;letter-spacing:-1.4px;">186</span>
<span class="t" style="left:60px;top:666px;font-size:28.5px;line-height:36px;color:#1c1c1c;">跑步机</span>
<span class="t" style="left:185.2px;top:665px;width:120px;text-align:right;font-size:29px;line-height:36px;color:#262626;letter-spacing:-1.4px;">122</span>
<span class="t" style="left:313.2px;top:665px;width:120px;text-align:right;font-size:29px;line-height:36px;color:#262626;letter-spacing:-1.4px;">173</span>
<span class="t" style="left:441.2px;top:665px;width:120px;text-align:right;font-size:29px;line-height:36px;color:#262626;letter-spacing:-1.4px;">160</span>
<span class="t" style="left:569.2px;top:665px;width:120px;text-align:right;font-size:29px;line-height:36px;color:#262626;letter-spacing:-1.4px;">97</span>
<span class="t" style="left:697.2px;top:665px;width:120px;text-align:right;font-size:29px;line-height:36px;color:#262626;letter-spacing:-1.4px;">118</span>
<span class="t" style="left:825.2px;top:665px;width:120px;text-align:right;font-size:29px;line-height:36px;color:#262626;letter-spacing:-1.4px;">130</span>
<span class="t" style="left:60px;top:720px;font-size:28.5px;line-height:36px;color:#1c1c1c;">洗衣机</span>
<span class="t" style="left:185.2px;top:719px;width:120px;text-align:right;font-size:29px;line-height:36px;color:#262626;letter-spacing:-1.4px;">73</span>
<span class="t" style="left:313.2px;top:719px;width:120px;text-align:right;font-size:29px;line-height:36px;color:#262626;letter-spacing:-1.4px;">96</span>
<span class="t" style="left:441.2px;top:719px;width:120px;text-align:right;font-size:29px;line-height:36px;color:#262626;letter-spacing:-1.4px;">101</span>
<span class="t" style="left:569.2px;top:719px;width:120px;text-align:right;font-size:29px;line-height:36px;color:#262626;letter-spacing:-1.4px;">169</span>
<span class="t" style="left:697.2px;top:719px;width:120px;text-align:right;font-size:29px;line-height:36px;color:#262626;letter-spacing:-1.4px;">125</span>
<span class="t" style="left:825.2px;top:719px;width:120px;text-align:right;font-size:29px;line-height:36px;color:#262626;letter-spacing:-1.4px;">98</span>
<span class="t" style="left:60px;top:774px;font-size:28.5px;line-height:36px;color:#1c1c1c;">微波炉</span>
<span class="t" style="left:185.2px;top:773px;width:120px;text-align:right;font-size:29px;line-height:36px;color:#262626;letter-spacing:-1.4px;">61</span>
<span class="t" style="left:313.2px;top:773px;width:120px;text-align:right;font-size:29px;line-height:36px;color:#262626;letter-spacing:-1.4px;">70</span>
<span class="t" style="left:441.2px;top:773px;width:120px;text-align:right;font-size:29px;line-height:36px;color:#262626;letter-spacing:-1.4px;">137</span>
<span class="t" style="left:569.2px;top:773px;width:120px;text-align:right;font-size:29px;line-height:36px;color:#262626;letter-spacing:-1.4px;">145</span>
<span class="t" style="left:697.2px;top:773px;width:120px;text-align:right;font-size:29px;line-height:36px;color:#262626;letter-spacing:-1.4px;">104</span>
<span class="t" style="left:825.2px;top:773px;width:120px;text-align:right;font-size:29px;line-height:36px;color:#262626;letter-spacing:-1.4px;">200</span>
<div style="left:182px;top:331px;width:1px;height:53px;background:#0070c0;"></div>
<div style="left:182px;top:331px;width:1px;height:53px;background:repeating-linear-gradient(180deg,#fff 0 2px,transparent 2px 4px);"></div>
<div style="left:182px;top:385px;width:1px;height:430px;background:#fff;"></div>
<div style="left:182px;top:385px;width:1px;height:430px;background:repeating-linear-gradient(180deg,#2c6597 0 2px,transparent 2px 4px);"></div>
<div style="left:310px;top:331px;width:1px;height:53px;background:#0070c0;"></div>
<div style="left:310px;top:331px;width:1px;height:53px;background:repeating-linear-gradient(180deg,#fff 0 2px,transparent 2px 4px);"></div>
<div style="left:310px;top:385px;width:1px;height:430px;background:#fff;"></div>
<div style="left:310px;top:385px;width:1px;height:430px;background:repeating-linear-gradient(180deg,#2c6597 0 2px,transparent 2px 4px);"></div>
<div style="left:438px;top:331px;width:1px;height:53px;background:#0070c0;"></div>
<div style="left:438px;top:331px;width:1px;height:53px;background:repeating-linear-gradient(180deg,#fff 0 2px,transparent 2px 4px);"></div>
<div style="left:438px;top:385px;width:1px;height:430px;background:#fff;"></div>
<div style="left:438px;top:385px;width:1px;height:430px;background:repeating-linear-gradient(180deg,#2c6597 0 2px,transparent 2px 4px);"></div>
<div style="left:566px;top:331px;width:1px;height:53px;background:#0070c0;"></div>
<div style="left:566px;top:331px;width:1px;height:53px;background:repeating-linear-gradient(180deg,#fff 0 2px,transparent 2px 4px);"></div>
<div style="left:566px;top:385px;width:1px;height:430px;background:#fff;"></div>
<div style="left:566px;top:385px;width:1px;height:430px;background:repeating-linear-gradient(180deg,#2c6597 0 2px,transparent 2px 4px);"></div>
<div style="left:694px;top:331px;width:1px;height:53px;background:#0070c0;"></div>
<div style="left:694px;top:331px;width:1px;height:53px;background:repeating-linear-gradient(180deg,#fff 0 2px,transparent 2px 4px);"></div>
<div style="left:694px;top:385px;width:1px;height:430px;background:#fff;"></div>
<div style="left:694px;top:385px;width:1px;height:430px;background:repeating-linear-gradient(180deg,#2c6597 0 2px,transparent 2px 4px);"></div>
<div style="left:822px;top:331px;width:1px;height:53px;background:#0070c0;"></div>
<div style="left:822px;top:331px;width:1px;height:53px;background:repeating-linear-gradient(180deg,#fff 0 2px,transparent 2px 4px);"></div>
<div style="left:822px;top:385px;width:1px;height:430px;background:#fff;"></div>
<div style="left:822px;top:385px;width:1px;height:430px;background:repeating-linear-gradient(180deg,#2c6597 0 2px,transparent 2px 4px);"></div>
<div style="left:55px;top:384px;width:895px;height:1px;background:#fff;"></div>
<div style="left:55px;top:384px;width:895px;height:1px;background:repeating-linear-gradient(90deg,#2c6597 0 2px,transparent 2px 4px);"></div>
<div style="left:55px;top:438px;width:895px;height:1px;background:#fff;"></div>
<div style="left:55px;top:438px;width:895px;height:1px;background:repeating-linear-gradient(90deg,#2c6597 0 2px,transparent 2px 4px);"></div>
<div style="left:55px;top:492px;width:895px;height:1px;background:#fff;"></div>
<div style="left:55px;top:492px;width:895px;height:1px;background:repeating-linear-gradient(90deg,#2c6597 0 2px,transparent 2px 4px);"></div>
<div style="left:55px;top:546px;width:895px;height:1px;background:#fff;"></div>
<div style="left:55px;top:546px;width:895px;height:1px;background:repeating-linear-gradient(90deg,#2c6597 0 2px,transparent 2px 4px);"></div>
<div style="left:55px;top:600px;width:895px;height:1px;background:#fff;"></div>
<div style="left:55px;top:600px;width:895px;height:1px;background:repeating-linear-gradient(90deg,#2c6597 0 2px,transparent 2px 4px);"></div>
<div style="left:55px;top:654px;width:895px;height:1px;background:#fff;"></div>
<div style="left:55px;top:654px;width:895px;height:1px;background:repeating-linear-gradient(90deg,#2c6597 0 2px,transparent 2px 4px);"></div>
<div style="left:55px;top:708px;width:895px;height:1px;background:#fff;"></div>
<div style="left:55px;top:708px;width:895px;height:1px;background:repeating-linear-gradient(90deg,#2c6597 0 2px,transparent 2px 4px);"></div>
<div style="left:55px;top:762px;width:895px;height:1px;background:#fff;"></div>
<div style="left:55px;top:762px;width:895px;height:1px;background:repeating-linear-gradient(90deg,#2c6597 0 2px,transparent 2px 4px);"></div>
<div style="left:949px;top:385px;width:2px;height:432px;background:#1f6aa5;"></div>
<div style="left:55px;top:815px;width:896px;height:2px;background:#1f6aa5;"></div>
<div style="left:1293px;top:296px;width:19px;height:577px;background:#f1f1f1;"></div>
<div style="left:1293px;top:296px;width:19px;height:20px;background:#fff;border:1px solid #c8c8c8;"></div>
<i class="dd" style="left:1298px;top:303px;border-top:none;border-bottom:5px solid #777;border-left-width:4.5px;border-right-width:4.5px;"></i>
<div style="left:1293px;top:315px;width:19px;height:350px;background:#fff;border:1px solid #ababab;"></div>
<div style="left:1293px;top:853px;width:19px;height:20px;background:#fff;border:1px solid #c8c8c8;"></div>
<i class="dd" style="left:1298px;top:861px;border-top:5px solid #777;border-left-width:4.5px;border-right-width:4.5px;"></i>
<div style="left:1px;top:872px;width:1314px;height:28px;background:#f3f3f3;"></div>
<div style="left:1px;top:872px;width:1289px;height:1px;background:#ababab;"></div>
<i class="dd" style="left:29px;top:882px;border:none;border-top:4.5px solid transparent;border-bottom:4.5px solid transparent;border-right:5px solid #c4c4c4;"></i>
<i class="dd" style="left:57px;top:882px;border:none;border-top:4.5px solid transparent;border-bottom:4.5px solid transparent;border-left:5px solid #c4c4c4;"></i>
<div style="left:101px;top:877px;width:1px;height:19px;background:#ababab;"></div>
<div style="left:321px;top:877px;width:1px;height:19px;background:#ababab;"></div>
<div style="left:402px;top:877px;width:1px;height:19px;background:#ababab;"></div>
<div style="left:482px;top:877px;width:1px;height:19px;background:#ababab;"></div>
<div style="left:159px;top:872px;width:82px;height:25px;background:#fff;border-left:1px solid #c6c6c6;border-right:1px solid #c6c6c6;border-bottom:2px solid #217346;"></div>
<span class="t" style="left:113px;top:872.5px;font-size:17px;line-height:22px;color:#444;">数据</span>
<span class="t" style="left:172px;top:872.5px;font-size:17px;line-height:22px;color:#217346;">2014年</span>
<span class="t" style="left:253px;top:872.5px;font-size:17px;line-height:22px;color:#444;">2015年</span>
<span class="t" style="left:333.5px;top:872.5px;font-size:17px;line-height:22px;color:#444;">2016年</span>
<span class="t" style="left:414.5px;top:872.5px;font-size:17px;line-height:22px;color:#444;">2017年</span>
<svg style="left:514px;top:876px;" width="22" height="22" viewBox="0 0 22 22"><circle cx="11" cy="11" r="9.6" fill="none" stroke="#777" stroke-width="1.3"/><path d="M11 5.5V16.5M5.5 11H16.5" stroke="#666" stroke-width="1.8"/></svg>
<div style="left:786px;top:881px;width:3px;height:2px;background:#aaa;"></div>
<div style="left:786px;top:886px;width:3px;height:2px;background:#aaa;"></div>
<div style="left:786px;top:891px;width:3px;height:2px;background:#aaa;"></div>
<div style="left:804px;top:877px;width:488px;height:19px;background:#f3f3f3;border:1px solid #c8c8c8;"></div>
<div style="left:804px;top:877px;width:19px;height:19px;background:#fff;border:1px solid #c8c8c8;"></div>
<i class="dd" style="left:810px;top:882px;border:none;border-top:4.5px solid transparent;border-bottom:4.5px solid transparent;border-right:5px solid #666;"></i>
<div style="left:822px;top:877px;width:400px;height:19px;background:#fff;border:1px solid #c0c0c0;"></div>
<div style="left:1273px;top:877px;width:19px;height:19px;background:#fff;border:1px solid #c8c8c8;"></div>
<i class="dd" style="left:1280px;top:882px;border:none;border-top:4.5px solid transparent;border-bottom:4.5px solid transparent;border-left:5px solid #666;"></i>
<div style="left:0px;top:900px;width:1316px;height:29px;background:#217346;"></div>
<span class="t" style="left:9px;top:903.7px;font-size:15px;line-height:20px;color:#fff;">就绪</span>
<svg style="left:60px;top:906px;" width="16" height="16" viewBox="0 0 16 16"><rect x="1.8" y="1.8" width="12.8" height="12.4" fill="none" stroke="#fff" stroke-width="1.5"/><rect x="1.8" y="1.8" width="12.8" height="3" fill="#fff"/><rect x="8" y="2.6" width="5.6" height="1.3" fill="#217346"/><rect x="3.8" y="6.6" width="2.2" height="1.3" fill="#fff"/><rect x="7.2" y="6.6" width="2.2" height="1.3" fill="#fff"/><rect x="10.6" y="6.6" width="2.2" height="1.3" fill="#fff"/><rect x="3.8" y="9.3" width="2.2" height="1.3" fill="#fff"/><rect x="7.2" y="9.3" width="2.2" height="1.3" fill="#fff"/><rect x="10.6" y="9.3" width="2.2" height="1.3" fill="#fff"/><rect x="3.8" y="12.0" width="2.2" height="1.3" fill="#fff"/><rect x="7.2" y="12.0" width="2.2" height="1.3" fill="#fff"/><rect x="10.6" y="12.0" width="2.2" height="1.3" fill="#fff"/><circle cx="3.8" cy="3.9" r="3.3" fill="#fff"/><circle cx="3.8" cy="3.9" r="1.7" fill="#cfe3d6"/></svg>
<div style="left:957px;top:900px;width:42px;height:29px;background:#185c37;"></div>
<svg style="left:970px;top:908px;" width="17" height="14" viewBox="0 0 17 14"><rect x="0.5" y="0.5" width="16" height="13" fill="none" stroke="#fff"/><path d="M0.5 4.5H16.5M0.5 9H16.5M6 0.5V13.5M11 0.5V13.5" stroke="#fff"/></svg>
<svg style="left:1011px;top:906px;" width="18" height="16" viewBox="0 0 18 16"><rect x="0.5" y="0.5" width="17" height="15" fill="none" stroke="#fff"/><rect x="3.5" y="3.5" width="11" height="9" fill="none" stroke="#fff"/><path d="M6 6.5H12" stroke="#fff"/></svg>
<svg style="left:1053px;top:907px;" width="18" height="15" viewBox="0 0 18 15"><rect x="0.5" y="0.5" width="17" height="14" fill="none" stroke="#fff"/><path d="M3 0.5V8H8V0.5M10 0.5V8H15V0.5" fill="#fff" stroke="#fff"/></svg>
<div style="left:1088px;top:913px;width:7px;height:1px;background:#fff;"></div>
<div style="left:1102px;top:913px;width:122px;height:1px;background:#fff;"></div>
<div style="left:1163px;top:909px;width:1px;height:9px;background:#fff;"></div>
<div style="left:1174px;top:906px;width:5px;height:15px;background:#fff;"></div>
<div style="left:1232px;top:913px;width:9px;height:1px;background:#fff;"></div>
<div style="left:1236px;top:909px;width:1px;height:9px;background:#fff;"></div>
<span class="t" style="left:1254px;top:905px;font-size:15px;line-height:20px;color:#fff;">160%</span>
<span class="t" style="left:931px;top:877.5px;font-size:34px;line-height:42px;color:#fff;letter-spacing:3px;filter:drop-shadow(1.3px 1.3px 0.4px rgba(55,55,55,.95));">头条号</span>
<span class="t" style="left:1048.5px;top:877.5px;font-size:34px;line-height:42px;color:#fff;filter:drop-shadow(1.3px 1.3px 0.4px rgba(55,55,55,.95));transform:scaleX(1.5);">/</span>
<span class="t" style="left:1072.5px;top:877.5px;font-size:34px;line-height:42px;color:#fff;filter:drop-shadow(1.3px 1.3px 0.4px rgba(55,55,55,.95));">excel</span>
<span class="t" style="left:1156.5px;top:877.5px;font-size:34px;line-height:42px;color:#fff;letter-spacing:0.3px;filter:drop-shadow(1.3px 1.3px 0.4px rgba(55,55,55,.95));">函数教程</span>
</body></html>
